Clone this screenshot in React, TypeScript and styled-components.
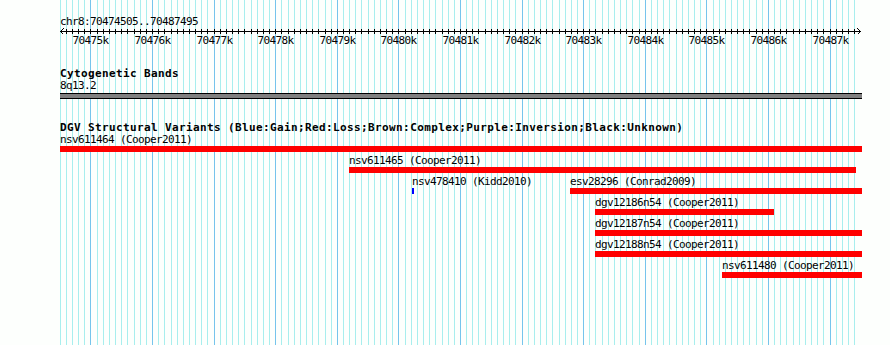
import styled, { createGlobalStyle } from "styled-components";

const VIEW_START = 70474505;
const VIEW_END = 70487495;
const TRACK_LEFT = 60;
const TRACK_WIDTH = 802;
const SCALE = 800 / (VIEW_END - VIEW_START);

const toPx = (bp: number) => Math.round((bp - VIEW_START) * SCALE);

const GlobalStyle = createGlobalStyle`
  html, body {
    margin: 0;
    padding: 0;
    background: #fdfffd;
  }
`;

const Canvas = styled.div`
  position: relative;
  width: 890px;
  height: 345px;
  overflow: hidden;
  background: #fdfffd;
  font-family: "DejaVu Sans Mono", "Liberation Mono", monospace;
  font-size: 11px;
  letter-spacing: -0.62px;
  color: #000;
`;

const GridLayer = styled.svg`
  position: absolute;
  top: 0;
  left: 0;
`;

const Tracks = styled.div`
  position: relative;
  display: flex;
  flex-direction: column;
  padding-left: ${TRACK_LEFT}px;
`;

const RulerTrack = styled.div`
  display: flex;
  flex-direction: column;
  padding-top: 15px;
`;

const Line = styled.div`
  height: 13px;
  line-height: 13px;
  white-space: nowrap;
`;

const RulerSvg = styled.svg`
  display: block;
  overflow: visible;
`;

const TickRow = styled.div`
  position: relative;
  height: 13px;
  line-height: 13px;
`;

const TickLabel = styled.span`
  position: absolute;
  top: 0;
  transform: translateX(-50%);
  white-space: nowrap;
`;

const Track = styled.section<{ $gap: number }>`
  display: flex;
  flex-direction: column;
  margin-top: ${(p) => p.$gap}px;
`;

const TrackTitle = styled.div`
  height: 12px;
  line-height: 13px;
  font-weight: bold;
  letter-spacing: 0.38px;
  white-space: nowrap;
`;

const BandBar = styled.div`
  width: ${TRACK_WIDTH}px;
  height: 4px;
  margin-top: 1px;
  background: #808080;
  border-top: 1px solid #000;
  border-bottom: 1px solid #000;
`;

const FeatureRow = styled.div`
  position: relative;
  height: 21px;
`;

const Feature = styled.div`
  position: absolute;
  top: 0;
  display: flex;
  flex-direction: column;
`;

const FeatureBar = styled.div<{ $color: string }>`
  height: 6px;
  background: ${(p) => p.$color};
`;

interface Variant {
  name: string;
  study: string;
  start: number;
  end: number;
  color: string;
}

const RED = "#ff0000";
const BLUE = "#0000ff";

const rows: Variant[][] = [
  [{ name: "nsv611464", study: "Cooper2011", start: 70474000, end: 70488000, color: RED }],
  [{ name: "nsv611465", study: "Cooper2011", start: 70479198, end: 70487430, color: RED }],
  [
    { name: "nsv478410", study: "Kidd2010", start: 70480221, end: 70480253, color: BLUE },
    { name: "esv28296", study: "Conrad2009", start: 70482786, end: 70490000, color: RED },
  ],
  [{ name: "dgv12186n54", study: "Cooper2011", start: 70483192, end: 70486098, color: RED }],
  [{ name: "dgv12187n54", study: "Cooper2011", start: 70483192, end: 70490000, color: RED }],
  [{ name: "dgv12188n54", study: "Cooper2011", start: 70483192, end: 70490000, color: RED }],
  [{ name: "nsv611480", study: "Cooper2011", start: 70485254, end: 70490000, color: RED }],
];

const minorTicks: number[] = [];
for (let bp = 70474500; bp <= 70487400; bp += 100) minorTicks.push(bp);
const majorTicks = minorTicks.filter((bp) => bp % 1000 === 0);

function Grid() {
  return (
    <GridLayer width={890} height={345} shapeRendering="crispEdges">
      {minorTicks.map((bp) => (
        <line
          key={bp}
          x1={TRACK_LEFT + toPx(bp) + 0.5}
          x2={TRACK_LEFT + toPx(bp) + 0.5}
          y1={0}
          y2={345}
          stroke={bp % 1000 === 0 ? "#76c4ec" : "#a8eeee"}
          strokeWidth={1}
        />
      ))}
    </GridLayer>
  );
}

function Ruler() {
  return (
    <RulerTrack>
      <Line>chr8:70474505..70487495</Line>
      <RulerSvg width={TRACK_WIDTH} height={6} shapeRendering="crispEdges">
        <line x1={0} x2={801} y1={3.5} y2={3.5} stroke="#000" />
        {minorTicks.slice(1).map((bp) => (
          <line key={bp} x1={toPx(bp) + 0.5} x2={toPx(bp) + 0.5} y1={1} y2={6} stroke="#000" />
        ))}
        <polyline points="3.5,0.5 0.5,3.5 3.5,6.5" fill="none" stroke="#000" />
        <polyline points="797.5,0.5 800.5,3.5 797.5,6.5" fill="none" stroke="#000" />
      </RulerSvg>
      <TickRow>
        {majorTicks.map((bp) => (
          <TickLabel key={bp} style={{ left: toPx(bp) + 0.5 }}>
            {bp / 1000}k
          </TickLabel>
        ))}
      </TickRow>
    </RulerTrack>
  );
}

function App() {
  return (
    <>
      <GlobalStyle />
      <Canvas>
        <Grid />
        <Tracks>
          <Ruler />
          <Track $gap={20}>
            <TrackTitle>Cytogenetic Bands</TrackTitle>
            <Line>8q13.2</Line>
            <BandBar />
          </Track>
          <Track $gap={22}>
            <TrackTitle>
              DGV Structural Variants (Blue:Gain;Red:Loss;Brown:Complex;Purple:Inversion;Black:Unknown)
            </TrackTitle>
            {rows.map((row, i) => (
              <FeatureRow key={i}>
                {row.map((v) => {
                  const left = Math.max(0, toPx(v.start));
                  const right = Math.min(TRACK_WIDTH, toPx(v.end));
                  return (
                    <Feature key={v.name} style={{ left }}>
                      <Line>
                        {v.name} ({v.study})
                      </Line>
                      <FeatureBar $color={v.color} style={{ width: Math.max(2, right - left) }} />
                    </Feature>
                  );
                })}
              </FeatureRow>
            ))}
          </Track>
        </Tracks>
      </Canvas>
    </>
  );
}

export default App;
